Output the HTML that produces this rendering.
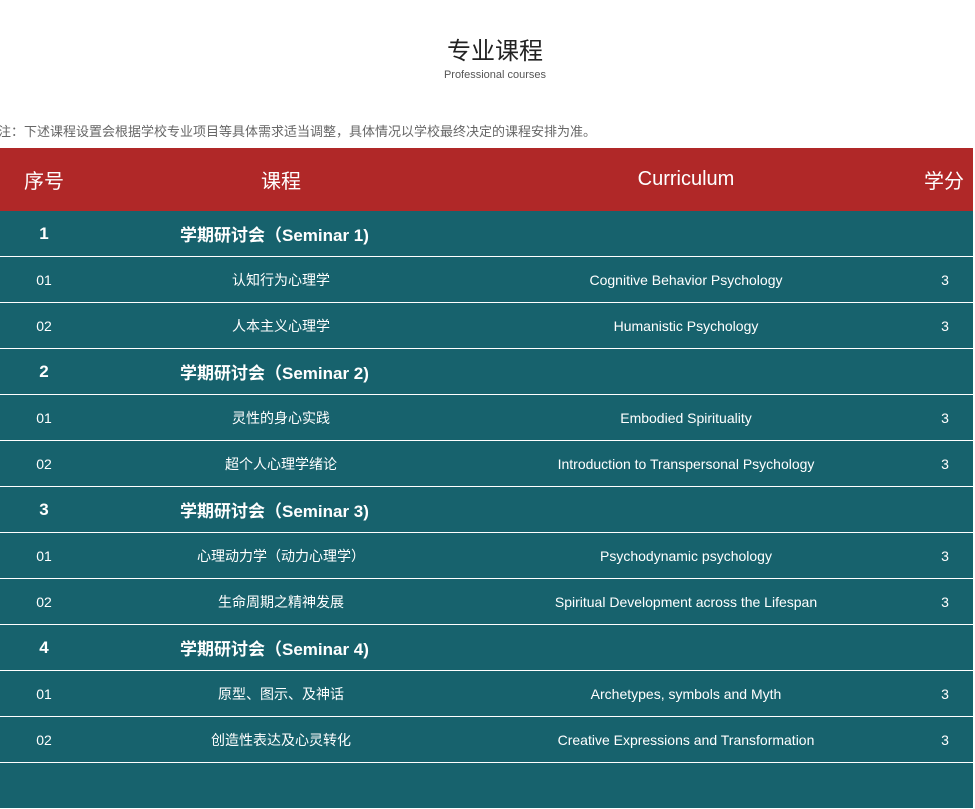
<!DOCTYPE html>
<html><head><meta charset="utf-8"><style>
*{margin:0;padding:0;box-sizing:border-box}
body{width:975px;height:766px;overflow:hidden;background:#fff;font-family:"Liberation Sans","Noto Sans CJK SC",sans-serif;position:relative}
.t1{position:absolute;top:31px;left:0;width:990px;text-align:center;font-size:24px;color:#222}
.t2{position:absolute;top:69px;left:0;width:990px;text-align:center;font-size:11px;color:#555}
.note{position:absolute;top:121px;left:-2px;font-size:13px;color:#666;white-space:nowrap}
.hd{position:absolute;top:148px;left:0;width:973px;height:63px;background:#b02828;color:#fff;font-size:20px}
.r{position:absolute;left:0;width:973px;height:46px;background:#17626d;color:#fff;border-bottom:1px solid #fff}
.c{position:absolute;top:0;height:100%;display:flex;align-items:center;justify-content:center;white-space:nowrap}
.a{left:4px;width:80px}.b{left:181px;width:200px}.d{left:486px;width:400px}.e{left:905px;width:80px}
.r .c{font-size:14px}
.g .c{font-weight:bold;font-size:17px}
.g .b{justify-content:flex-start;left:180px;width:300px}
</style></head><body>
<div class="t1">专业课程</div>
<div class="t2">Professional courses</div>
<div class="note">注：下述课程设置会根据学校专业项目等具体需求适当调整，具体情况以学校最终决定的课程安排为准。</div>
<div class="hd"><div class="c a">序号</div><div class="c b">课程</div><div class="c d">Curriculum</div><div class="c e" style="left:904px">学分</div></div>

<div class="r g" style="top:211px"><div class="c a">1</div><div class="c b">学期研讨会（Seminar 1)</div></div>
<div class="r" style="top:257px"><div class="c a">01</div><div class="c b">认知行为心理学</div><div class="c d">Cognitive Behavior Psychology</div><div class="c e">3</div></div>
<div class="r" style="top:303px"><div class="c a">02</div><div class="c b">人本主义心理学</div><div class="c d">Humanistic Psychology</div><div class="c e">3</div></div>
<div class="r g" style="top:349px"><div class="c a">2</div><div class="c b">学期研讨会（Seminar 2)</div></div>
<div class="r" style="top:395px"><div class="c a">01</div><div class="c b">灵性的身心实践</div><div class="c d">Embodied Spirituality</div><div class="c e">3</div></div>
<div class="r" style="top:441px"><div class="c a">02</div><div class="c b">超个人心理学绪论</div><div class="c d">Introduction to Transpersonal Psychology</div><div class="c e">3</div></div>
<div class="r g" style="top:487px"><div class="c a">3</div><div class="c b">学期研讨会（Seminar 3)</div></div>
<div class="r" style="top:533px"><div class="c a">01</div><div class="c b">心理动力学（动力心理学）</div><div class="c d">Psychodynamic psychology</div><div class="c e">3</div></div>
<div class="r" style="top:579px"><div class="c a">02</div><div class="c b">生命周期之精神发展</div><div class="c d">Spiritual Development across the Lifespan</div><div class="c e">3</div></div>
<div class="r g" style="top:625px"><div class="c a">4</div><div class="c b">学期研讨会（Seminar 4)</div></div>
<div class="r" style="top:671px"><div class="c a">01</div><div class="c b">原型、图示、及神话</div><div class="c d">Archetypes, symbols and Myth</div><div class="c e">3</div></div>
<div class="r" style="top:717px"><div class="c a">02</div><div class="c b">创造性表达及心灵转化</div><div class="c d">Creative Expressions and Transformation</div><div class="c e">3</div></div>
<div class="r" style="top:763px"></div>
</body></html>
